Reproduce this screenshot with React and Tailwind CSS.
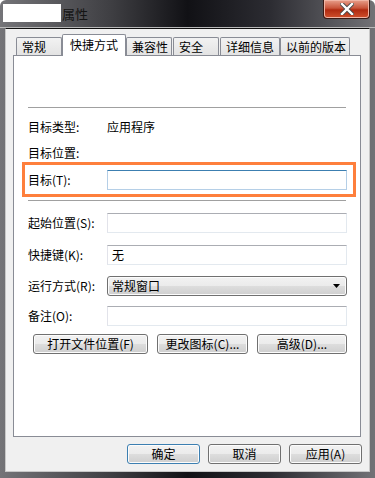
import React from 'react';

// Win7-style "属性" dialog, 快捷方式 tab
const tabs = [
    { label: '常规', w: 'w-[46px]', ml: 'ml-[8px]' },
    { label: '快捷方式', w: 'w-[64px]', ml: 'ml-0', active: true },
    { label: '兼容性', w: 'w-[46px]', ml: 'ml-0' },
    { label: '安全', w: 'w-[46px]', ml: 'ml-[1px]' },
    { label: '详细信息', w: 'w-[60px]', ml: 'ml-[1px]' },
    { label: '以前的版本', w: 'w-[70px]', ml: 'ml-0' },
];

const TextBox = ({ value, focus }) => (
    <div
        className={
            'h-[20px] flex-1 flex items-center px-[4px] bg-white border ' +
            (focus
                ? 'border-[#b5cfe7] border-t-[#3c7fb1]'
                : 'border-[#e3e9ef] border-t-[#abadb3] border-l-[#e2e3ea]')
        }
    >
        {value}
    </div>
);

const Row = ({ label, children }) => (
    <div className="flex items-center h-[20px]">
        <span className="w-[79px] shrink-0">{label}</span>
        {children}
    </div>
);

const Button = ({ children, w, focus }) => (
    <div
        className={
            'h-[20px] flex items-center justify-center whitespace-nowrap rounded-[3px] border bg-[linear-gradient(#f2f2f2_0%,#ebebeb_50%,#dddddd_50%,#cfcfcf_100%)] shadow-[inset_0_0_0_1px_#fcfcfc] ' +
            (focus ? 'border-[#3c7fb1] shadow-[inset_0_0_0_1px_#48d8fb]' : 'border-[#707070]') +
            ' ' + w
        }
    >
        {children}
    </div>
);

export default function App() {
    return (
        <div className="w-[375px] h-[478px] flex flex-col text-[12px] leading-none text-black font-['Noto_Sans_CJK_SC',sans-serif] bg-[linear-gradient(90deg,#747478_0%,#3e3e42_30%,#111115_50%,#2c2c32_72%,#727276_100%)] rounded-t-[6px] overflow-hidden">
            {/* title bar */}
            <div className="h-[28px] shrink-0 flex items-start pl-[3px] border-b border-[#b8b8b8]">
                <div className="mt-[4px] w-[58px] h-[18px] bg-white"></div>
                <span className="mt-[7px] ml-[1px] text-[13px] text-[#141414]">属性</span>
                <div className="ml-auto mr-[5px] w-[47px] h-[19px] flex items-center justify-center rounded-b-[4px] border border-t-0 border-[#3a1a14] bg-[linear-gradient(#e8a08c_0%,#c8543a_45%,#b02a10_55%,#d0502c_100%)] shadow-[inset_0_0_0_1px_#f0b4a4]">
                    <svg width="14" height="12" viewBox="0 0 14 12">
                        <path d="M2 1 L12 11 M12 1 L2 11" stroke="#4a4a4a" strokeWidth="4.2" strokeLinecap="square" />
                        <path d="M2 1 L12 11 M12 1 L2 11" stroke="#ffffff" strokeWidth="2.4" strokeLinecap="square" />
                    </svg>
                </div>
            </div>

            {/* client area */}
            <div className="flex-1 mx-[5px] mb-[6px] bg-[#f0f0f0] border border-t-[#101010] border-[#c8c8c8] flex flex-col">
                {/* tabs */}
                <div className="flex items-end h-[26px] pt-[5px] ml-[2px]">
                    {tabs.map((t) => (
                        <div
                            key={t.label}
                            className={
                                t.ml + ' ' + t.w + ' flex items-center whitespace-nowrap overflow-hidden rounded-t-[2px] border border-b-0 border-[#898c95] text-[12px] ' +
                                (t.active
                                    ? 'h-[22px] bg-white -mb-px relative z-10 pl-[7px] pb-[1px]'
                                    : 'h-[18px] bg-[linear-gradient(#f2f2f2,#e3e3e3)] pl-[5px]')
                            }
                        >
                            {t.label}
                        </div>
                    ))}
                </div>

                {/* tab panel */}
                <div className="ml-[7px] w-[348px] h-[382px] bg-white border border-[#898c95] pl-[14px] pr-[13px] flex flex-col">
                    <div className="h-[51px] shrink-0"></div>
                    <div className="h-px bg-[#a0a0a0] mr-[1px]"></div>

                    <div className="mt-[9px]">
                        <Row label="目标类型:">
                            <span>应用程序</span>
                        </Row>
                    </div>
                    <div className="mt-[6px]">
                        <Row label="目标位置:" />
                    </div>

                    <div className="-mt-[1px] -ml-[6px] w-[334px] h-[35px] border-[3px] border-[#fe7f3c] pl-[3px] pr-[6px] pt-[5px]">
                        <Row label="目标(T):">
                            <TextBox focus />
                        </Row>
                    </div>

                    <div className="mt-[3px] h-px bg-[#a0a0a0] mr-[1px]"></div>

                    <div className="mt-[12px]">
                        <Row label="起始位置(S):">
                            <TextBox />
                        </Row>
                    </div>
                    <div className="mt-[12px]">
                        <Row label="快捷键(K):">
                            <TextBox value="无" />
                        </Row>
                    </div>
                    <div className="mt-[11px]">
                        <Row label="运行方式(R):">
                            <div className="flex-1 h-[20px] flex items-center pl-[4px] pr-[6px] rounded-[3px] border border-[#707070] bg-[linear-gradient(#f2f2f2_0%,#ebebeb_50%,#dddddd_50%,#cfcfcf_100%)] shadow-[inset_0_0_0_1px_#fcfcfc]">
                                <span>常规窗口</span>
                                <svg className="ml-auto" width="7" height="4" viewBox="0 0 7 4">
                                    <path d="M0 0 H7 L3.5 4 Z" fill="#000" />
                                </svg>
                            </div>
                        </Row>
                    </div>
                    <div className="mt-[10px]">
                        <Row label="备注(O):">
                            <TextBox />
                        </Row>
                    </div>

                    <div className="mt-[8px] flex ml-[5px]">
                        <Button w="w-[116px]">打开文件位置(F)</Button>
                        <div className="ml-[9px]">
                            <Button w="w-[91px]">更改图标(C)...</Button>
                        </div>
                        <div className="ml-[9px]">
                            <Button w="w-[90px]">高级(D)...</Button>
                        </div>
                    </div>
                </div>

                {/* dialog buttons */}
                <div className="mt-[7px] flex justify-end gap-[8px] pr-[7px]">
                    <Button w="w-[73px]" focus>确定</Button>
                    <Button w="w-[73px]">取消</Button>
                    <Button w="w-[73px]">应用(A)</Button>
                </div>
            </div>
        </div>
    );
}
